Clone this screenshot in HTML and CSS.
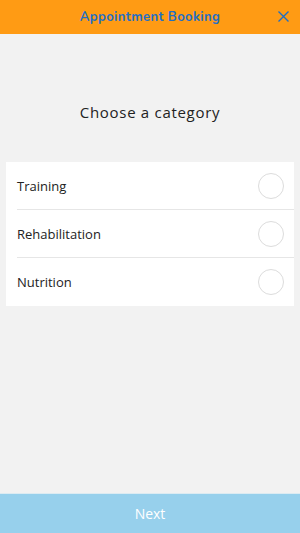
FILE: index.html
```html
<!DOCTYPE html>
<html lang="en">
<head>
    <meta charset="UTF-8">
    <meta name="viewport" content="width=device-width, initial-scale=1.0">
    <title>Appointment Booking</title>
    <link rel="stylesheet" href="styles.css">
</head>
<body>
    <div class="app">
        <header class="topbar">
            <span class="topbar-title">Appointment Booking</span>
            <button class="close-btn" aria-label="Close">
                <svg width="11" height="11" viewBox="0 0 11 11">
                    <path d="M0.5 0.5 L10.5 10.5 M10.5 0.5 L0.5 10.5" stroke="#1f6fc5" stroke-width="1.4" fill="none"/>
                </svg>
            </button>
        </header>

        <main class="content">
            <h2 class="heading">Choose a category</h2>

            <ul class="category-list">
                <li class="category-item">
                    <span>Training</span>
                    <span class="radio"></span>
                </li>
                <li class="category-item">
                    <span>Rehabilitation</span>
                    <span class="radio"></span>
                </li>
                <li class="category-item">
                    <span>Nutrition</span>
                    <span class="radio"></span>
                </li>
            </ul>
        </main>

        <button class="next-btn">Next</button>
    </div>
</body>
</html>
```

FILE: styles.css
```css
html, body {
    margin: 0;
    padding: 0;
    height: 100%;
}
body {
    font-family: "Open Sans", Arial, sans-serif;
    background-color: #f2f2f2;
}
.app {
    display: flex;
    flex-direction: column;
    height: 100%;
}
.topbar {
    height: 34px;
    background-color: #ff9b14;
    display: flex;
    align-items: center;
    justify-content: center;
    position: relative;
    flex-shrink: 0;
}
.topbar-title {
    font-family: "Nunito", "Lato", sans-serif;
    font-size: 13px;
    font-weight: 700;
    color: #1f6fc5;
    letter-spacing: 0.4px;
}
.close-btn {
    position: absolute;
    right: 11px;
    top: 11px;
    width: 11px;
    height: 11px;
    padding: 0;
    border: none;
    background: none;
    display: flex;
}
.content {
    flex: 1;
}
.heading {
    margin: 67px 0 0 0;
    text-align: center;
    font-size: 15px;
    font-weight: 400;
    letter-spacing: 0.7px;
    color: #222;
    line-height: 22px;
}
.category-list {
    list-style: none;
    margin: 39px 6px 0 6px;
    padding: 0 0 0 11px;
    background-color: #fff;
}
.category-item {
    display: flex;
    align-items: center;
    justify-content: space-between;
    height: 47px;
    padding-right: 10px;
    font-size: 13px;
    color: #222;
    border-bottom: 1px solid #e6e6e6;
}
.category-item:last-child {
    border-bottom: none;
    height: 48px;
}
.radio {
    width: 24px;
    height: 24px;
    border: 1px solid #dcdcdc;
    border-radius: 50%;
}
.next-btn {
    height: 40px;
    flex-shrink: 0;
    border: none;
    border-top: 1px solid #dcebf2;
    background-color: #97d0ec;
    color: #fff;
    font-family: "Open Sans", Arial, sans-serif;
    font-size: 14px;
    width: 100%;
}
```
